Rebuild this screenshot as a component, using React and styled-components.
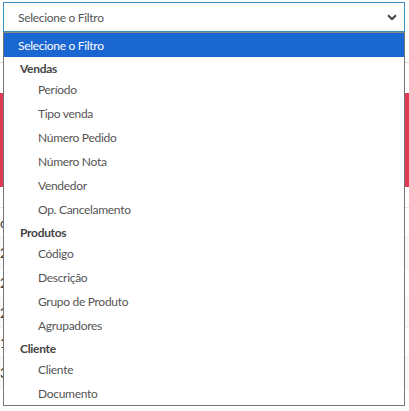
import React from "react";
import styled, { createGlobalStyle } from "styled-components";

const Global = createGlobalStyle`
  html, body { margin: 0; padding: 0; background: #fff; }
  body { font-family: Lato, "Noto Sans", sans-serif; overflow: hidden; }
`;

const Page = styled.div`
  position: relative;
  width: 409px;
  height: 411px;
  overflow: hidden;
  background: #fff;
`;

const Backdrop = styled.div`
  display: flex;
  flex-direction: column;
  padding-top: 62px;
`;

const Panel = styled.div`
  height: 14px;
  border-top: 1px solid #ddd;
  margin-left: -2px;
`;

const AlertBar = styled.div`
  margin-top: 16px;
  height: 94px;
  background: #dd3b4f;
`;

const Table = styled.div`
  margin-top: 20px;
  display: flex;
  flex-direction: column;
  border-top: 1px solid #e6e6e6;
`;

const Row = styled.div`
  height: 29px;
  display: flex;
  align-items: center;
  font-size: 13px;
  color: #333;
  background: ${(p) => (p.$striped ? "#f9f9f9" : "#fff")};
  border-bottom: 1px solid #eee;
`;

const Field = styled.div`
  position: absolute;
  left: 3px;
  top: 2px;
  width: 402px;
`;

const SelectBox = styled.div`
  box-sizing: border-box;
  height: 30px;
  border: 1px solid #3c8dbc;
  background: #fff;
  display: flex;
  align-items: center;
  justify-content: space-between;
  padding: 0 7px 0 14px;
  font-size: 12px;
  letter-spacing: -0.3px;
  color: #555;
`;

const List = styled.div`
  box-sizing: border-box;
  border: 1px solid #767676;
  border-top-color: #8a8a8a;
  background: #fff;
  display: flex;
  flex-direction: column;
  width: 402px;
`;

const Option = styled.div`
  height: 24px;
  display: flex;
  align-items: center;
  padding-left: ${(p) => (p.$nested ? "34px" : "14px")};
  font-size: 12px;
  letter-spacing: -0.3px;
  color: ${(p) => (p.$selected ? "#fff" : "#555")};
  background: ${(p) => (p.$selected ? "#1a67d2" : "transparent")};
`;

const Group = styled.div`
  height: 20px;
  display: flex;
  align-items: center;
  padding: 2px 0 0 16px;
  box-sizing: border-box;
  font-size: 12px;
  letter-spacing: -0.3px;
  font-weight: 700;
  color: #444;
`;

const groups = [
  { label: "Vendas", items: ["Período", "Tipo venda", "Número Pedido", "Número Nota", "Vendedor", "Op. Cancelamento"] },
  { label: "Produtos", items: ["Código", "Descrição", "Grupo de Produto", "Agrupadores"] },
  { label: "Cliente", items: ["Cliente", "Documento"] },
];

const rows = ["c", "2", "2", "2", "1", "3"];

export default function App() {
  return (
    <Page>
      <Global />
      <Backdrop>
        <Panel />
        <AlertBar />
        <Table>
          {rows.map((r, i) => (
            <Row key={i} $striped={i % 2 === 1}>{r}</Row>
          ))}
        </Table>
      </Backdrop>
      <Field>
        <SelectBox>
          <span>Selecione o Filtro</span>
          <svg width="10" height="7" viewBox="0 0 10 7">
            <path d="M1 1.2 L5 5 L9 1.2" fill="none" stroke="#444" strokeWidth="2" />
          </svg>
        </SelectBox>
        <List>
          <Option $selected>Selecione o Filtro</Option>
          {groups.map((g) => (
            <React.Fragment key={g.label}>
              <Group>{g.label}</Group>
              {g.items.map((it) => (
                <Option key={it} $nested>{it}</Option>
              ))}
            </React.Fragment>
          ))}
        </List>
      </Field>
    </Page>
  );
}
